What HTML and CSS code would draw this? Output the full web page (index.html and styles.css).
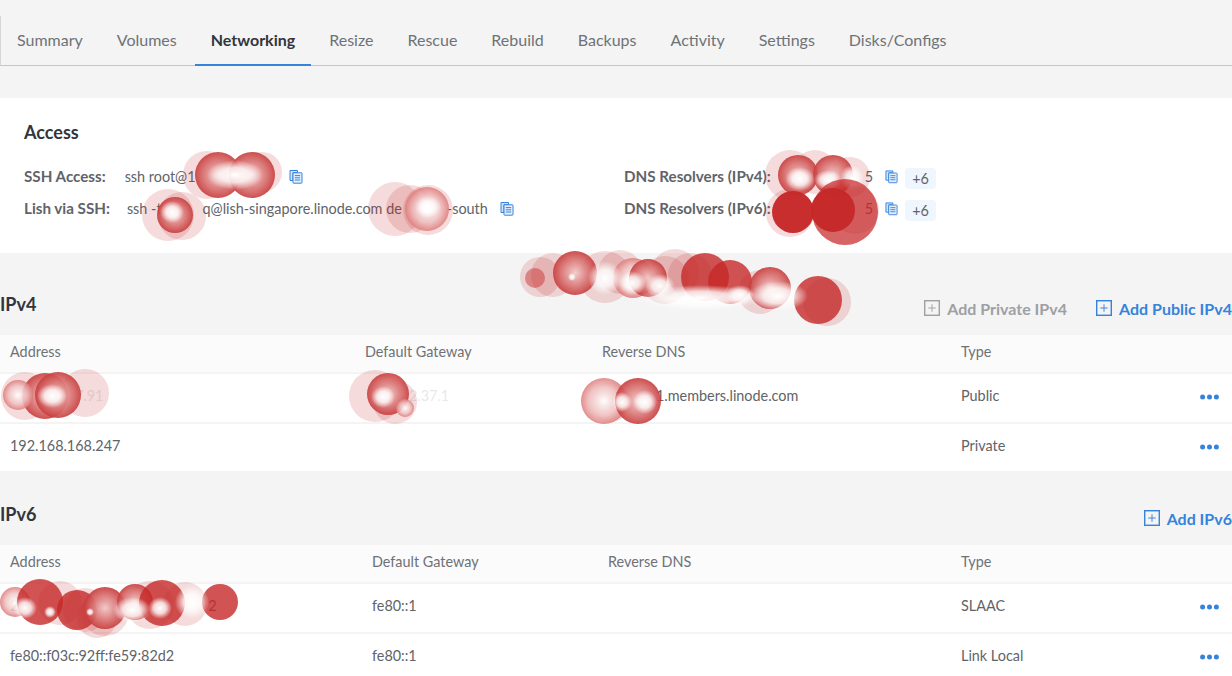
FILE: index.html
```html
<!DOCTYPE html>
<html lang="en">
<head>
<meta charset="utf-8">
<title>Networking</title>
<link rel="stylesheet" href="styles.css">
</head>
<body>
<svg width="0" height="0" class="defs" aria-hidden="true">
  <defs>
    <symbol id="copy" viewBox="0 0 14 15">
      <path d="M1 1.5h7.5v2H4v8H1z" fill="#cfe2f8" stroke="#3683dc" stroke-width="1"/>
      <rect x="4" y="3.8" width="9" height="10.4" rx=".6" fill="#e4effb" stroke="#3683dc" stroke-width="1"/>
      <path d="M5.8 6.6h5.4M5.8 8.8h5.4M5.8 11h5.4" stroke="#3683dc" stroke-width="1"/>
    </symbol>
    <symbol id="plus" viewBox="0 0 17 17">
      <rect x=".75" y=".75" width="15.5" height="15.5" fill="none" stroke="currentColor" stroke-width="1.5"/>
      <path d="M8.5 4.5v8M4.5 8.5h8" fill="none" stroke="currentColor" stroke-width="1"/>
    </symbol>
    <symbol id="dots" viewBox="0 0 19 6">
      <circle cx="2.6" cy="3" r="2.5" fill="#3683dc"/>
      <circle cx="9.5" cy="3" r="2.5" fill="#3683dc"/>
      <circle cx="16.4" cy="3" r="2.5" fill="#3683dc"/>
    </symbol>
  </defs>
</svg>

<nav class="tabs">
  <a class="tab">Summary</a>
  <a class="tab">Volumes</a>
  <a class="tab active">Networking</a>
  <a class="tab">Resize</a>
  <a class="tab">Rescue</a>
  <a class="tab">Rebuild</a>
  <a class="tab">Backups</a>
  <a class="tab">Activity</a>
  <a class="tab">Settings</a>
  <a class="tab">Disks/Configs</a>
</nav>

<section class="access">
  <h2 class="access-title">Access</h2>
  <div class="access-grid">
    <div class="access-row">
      <strong class="label">SSH Access:</strong>
      <span class="value v-ssh">ssh root@1<span class="hidden-part w-ssh"></span></span>
      <svg class="copy"><use href="#copy"/></svg>
    </div>
    <div class="access-row">
      <strong class="label">DNS Resolvers (IPv4):</strong>
      <span class="value v-dns"><span class="hidden-part w-dns"></span>5</span>
      <svg class="copy copy-dns"><use href="#copy"/></svg>
      <span class="chip">+6</span>
    </div>
    <div class="access-row">
      <strong class="label">Lish via SSH:</strong>
      <span class="value v-lish">ssh -t<span class="hidden-part w-l1"></span>q@lish-singapore.linode.com de<span class="hidden-part w-l2"></span>-south</span>
      <svg class="copy copy-lish"><use href="#copy"/></svg>
    </div>
    <div class="access-row">
      <strong class="label">DNS Resolvers (IPv6):</strong>
      <span class="value v-dns"><span class="hidden-part w-dns"></span>5</span>
      <svg class="copy copy-dns"><use href="#copy"/></svg>
      <span class="chip">+6</span>
    </div>
  </div>
</section>

<header class="sec-head sec-v4">
  <h3 class="sec-title">IPv4</h3>
  <div class="actions">
    <a class="action muted"><svg class="plus"><use href="#plus"/></svg>Add Private IPv4</a>
    <a class="action"><svg class="plus"><use href="#plus"/></svg>Add Public IPv4</a>
  </div>
</header>
<div class="table t4">
  <div class="row head"><span>Address</span><span>Default Gateway</span><span>Reverse DNS</span><span>Type</span><span></span></div>
  <div class="row"><span class="faded addr-v4">7.91</span><span class="faded gw-v4">2.37.1</span><span class="rdns">1.members.linode.com</span><span>Public</span><svg class="dots"><use href="#dots"/></svg></div>
  <div class="row last"><span>192.168.168.247</span><span></span><span></span><span>Private</span><svg class="dots"><use href="#dots"/></svg></div>
</div>

<header class="sec-head sec-v6">
  <h3 class="sec-title">IPv6</h3>
  <div class="actions">
    <a class="action"><svg class="plus"><use href="#plus"/></svg>Add IPv6</a>
  </div>
</header>
<div class="table t6">
  <div class="row head"><span>Address</span><span>Default Gateway</span><span>Reverse DNS</span><span>Type</span><span></span></div>
  <div class="row"><span>2<span class="hidden-part w-v6"></span>2</span><span>fe80::1</span><span></span><span>SLAAC</span><svg class="dots"><use href="#dots"/></svg></div>
  <div class="row"><span>fe80::f03c:92ff:fe59:82d2</span><span>fe80::1</span><span></span><span>Link Local</span><svg class="dots"><use href="#dots"/></svg></div>
</div>

<svg class="scribble" viewBox="0 0 1232 676" width="1232" height="676" aria-hidden="true">
  <defs>
    <radialGradient id="h"><stop offset="0" stop-color="#f3cccc" stop-opacity=".95"/><stop offset=".6" stop-color="#da7474" stop-opacity=".9"/><stop offset="1" stop-color="#c83c3c" stop-opacity=".9"/></radialGradient>
    <radialGradient id="l"><stop offset="0" stop-color="#fff" stop-opacity=".95"/><stop offset=".6" stop-color="#f0c4c4" stop-opacity=".85"/><stop offset="1" stop-color="#de7a7a" stop-opacity=".85"/></radialGradient>
    <radialGradient id="g"><stop offset="0" stop-color="#fff"/><stop offset=".5" stop-color="#fff" stop-opacity=".8"/><stop offset="1" stop-color="#fff" stop-opacity="0"/></radialGradient>
  </defs>
  <g class="faint">
    <circle cx="207" cy="175" r="24"/><circle cx="262" cy="172" r="20"/>
    <circle cx="168" cy="215" r="26"/><circle cx="182" cy="216" r="24"/>
    <circle cx="395" cy="209" r="27"/><circle cx="410" cy="209" r="24"/><circle cx="428" cy="210" r="25"/>
    <circle cx="790" cy="175" r="25"/><circle cx="850" cy="177" r="20"/><circle cx="815" cy="172" r="22"/>
    <circle cx="790" cy="213" r="24"/><circle cx="855" cy="210" r="24"/>
    <circle cx="540" cy="277" r="20"/><circle cx="553" cy="275" r="22"/><circle cx="605" cy="277" r="26"/><circle cx="620" cy="272" r="22"/><circle cx="675" cy="273" r="24"/><circle cx="690" cy="275" r="22"/><circle cx="665" cy="280" r="24"/><circle cx="827" cy="302" r="24"/><circle cx="760" cy="292" r="22"/>
    <circle cx="25" cy="396" r="24"/><circle cx="85" cy="393" r="24"/><circle cx="375" cy="396" r="26"/><circle cx="395" cy="402" r="22"/>
    <circle cx="610" cy="402" r="20"/>
    <circle cx="60" cy="603" r="22"/><circle cx="97" cy="618" r="20"/><circle cx="105" cy="612" r="24"/><circle cx="150" cy="605" r="24"/><circle cx="185" cy="604" r="22"/><circle cx="85" cy="610" r="22"/>
  </g>

  <circle cx="218" cy="175" r="23" fill="url(#h)"/><circle cx="252" cy="175" r="23" fill="url(#h)"/>
  <ellipse cx="235" cy="175" rx="28" ry="15" fill="url(#g)"/>
  <circle cx="175" cy="215" r="18" fill="url(#h)"/><ellipse cx="172" cy="212" rx="12" ry="11" fill="url(#g)"/>
  <circle cx="427" cy="209" r="22" fill="url(#l)"/><ellipse cx="428" cy="207" rx="13" ry="11" fill="url(#g)"/>
  <circle cx="798" cy="175" r="20" fill="url(#h)"/><circle cx="833" cy="175" r="20" fill="url(#h)"/>
  <ellipse cx="800" cy="179" rx="15" ry="12" fill="url(#g)"/><ellipse cx="828" cy="180" rx="14" ry="10" fill="url(#g)"/><ellipse cx="852" cy="178" rx="12" ry="13" fill="url(#g)"/>
  <circle cx="845" cy="212" r="33" class="mid"/><circle cx="793" cy="212" r="21" class="solid"/><circle cx="833" cy="210" r="22" class="solid"/>

  <circle cx="535" cy="278" r="10" class="mid-pale"/><circle cx="575" cy="273" r="22" fill="url(#h)"/><circle cx="572" cy="277" r="4" fill="url(#g)"/>
  <circle cx="633" cy="278" r="20" fill="url(#l)"/><circle cx="648" cy="278" r="19" fill="url(#h)"/>
  <circle cx="705" cy="277" r="24" class="mid-strong"/><circle cx="730" cy="282" r="22" class="mid-strong"/>
  <circle cx="770" cy="288" r="21" fill="url(#h)"/><circle cx="818" cy="300" r="24" class="mid-strong"/>
  <ellipse cx="700" cy="298" rx="62" ry="13" fill="url(#g)"/>
  <ellipse cx="605" cy="278" rx="17" ry="17" fill="url(#g)"/><ellipse cx="632" cy="283" rx="14" ry="12" fill="url(#g)"/><ellipse cx="660" cy="286" rx="15" ry="12" fill="url(#g)"/><ellipse cx="740" cy="295" rx="14" ry="10" fill="url(#g)"/><ellipse cx="778" cy="296" rx="30" ry="15" fill="url(#g)"/>

  <circle cx="45" cy="396" r="23" fill="url(#h)"/><circle cx="58" cy="395" r="23" fill="url(#h)"/><circle cx="18" cy="395" r="15" fill="url(#l)"/>
  <ellipse cx="52" cy="396" rx="15" ry="12" fill="url(#g)"/>
  <circle cx="388" cy="394" r="21" fill="url(#h)"/><circle cx="405" cy="408" r="9" fill="url(#l)"/><ellipse cx="383" cy="397" rx="12" ry="11" fill="url(#g)"/>
  <circle cx="604" cy="401" r="23" fill="url(#l)"/><circle cx="638" cy="401" r="23" fill="url(#h)"/><ellipse cx="645" cy="402" rx="12" ry="12" fill="url(#g)"/><ellipse cx="622" cy="402" rx="10" ry="10" fill="url(#g)"/>

  <circle cx="15" cy="602" r="15" fill="url(#l)"/><circle cx="40" cy="602" r="23" class="mid-strong"/>
  <circle cx="77" cy="610" r="20" class="mid-strong"/><circle cx="105" cy="608" r="21" fill="url(#h)"/>
  <circle cx="135" cy="602" r="18" fill="url(#h)"/><circle cx="162" cy="603" r="23" class="mid-strong"/>
  <circle cx="220" cy="602" r="18" class="mid-strong"/>
  <ellipse cx="25" cy="608" rx="12" ry="11" fill="url(#g)"/><ellipse cx="50" cy="612" rx="6" ry="6" fill="url(#g)"/><ellipse cx="90" cy="612" rx="4" ry="4" fill="url(#g)"/>
  <ellipse cx="132" cy="610" rx="19" ry="13" fill="url(#g)"/><ellipse cx="160" cy="608" rx="12" ry="11" fill="url(#g)"/><ellipse cx="192" cy="602" rx="17" ry="17" fill="url(#g)"/>
</svg>
</body>
</html>
```
FILE: styles.css
```css
* { box-sizing: border-box; }

html, body { margin: 0; height: 676px; overflow: hidden; }

body {
  position: relative;
  background: #f4f4f4;
  font-family: Lato, "Liberation Sans", sans-serif;
  font-size: 14.4px;
  color: #606469;
}

.defs { position: absolute; }

.tabs {
  display: flex;
  height: 50px;
  margin-top: 16px;
  border-left: 1px solid #d6d6d6;
  border-bottom: 1px solid #c5c6c8;
}
.tab {
  display: flex;
  align-items: center;
  height: 50px;
  padding: 0 17px 1px;
  font-size: 16px;
  color: #6e7277;
  border-bottom: 2px solid transparent;
}
.tab:first-child { padding-left: 16px; }
.tab.active {
  margin: 0 1px;
  padding: 0 16px 1px;
  font-weight: 700;
  color: #32363c;
  border-bottom-color: #3683dc;
}

.access {
  height: 155px;
  margin-top: 32px;
  padding: 23px 0 0 24px;
  background: #fff;
}
.access-title {
  margin: 0 0 17px;
  font-size: 18px;
  line-height: 22px;
  font-weight: 700;
  color: #32363c;
}
.access-grid {
  display: grid;
  grid-template-columns: 600px 1fr;
  grid-auto-rows: 32px;
}
.access-row { display: flex; align-items: center; }
.label { font-size: 15.2px; font-weight: 700; color: #606469; }
.value { white-space: nowrap; }
.v-ssh { margin-left: 19px; }
.v-lish { margin-left: 17px; }
.hidden-part { display: inline-block; }
.w-ssh { width: 85px; }
.w-l1 { width: 41px; }
.w-l2 { width: 45px; }
.w-dns { width: 94px; }
.w-v6 { width: 190px; }

.copy { width: 14px; height: 15px; margin-left: 9px; flex: none; }
.copy-lish { margin-left: 12px; }
.copy-dns { margin-left: 12px; width: 13px; }

.chip {
  display: flex;
  align-items: center;
  justify-content: center;
  width: 31px;
  height: 21px;
  margin: 4px 0 0 7px;
  background: #f0f6fe;
  border-radius: 4px;
}

.sec-head {
  display: flex;
  justify-content: space-between;
  align-items: flex-end;
}
.sec-v4 { height: 82px; }
.sec-v6 { height: 74px; }
.sec-title {
  margin: 0 0 20px;
  font-size: 18px;
  line-height: 22px;
  font-weight: 700;
  color: #32363c;
}
.actions { display: flex; gap: 29px; margin-bottom: 17px; }
.action {
  display: flex;
  align-items: center;
  gap: 7px;
  height: 20px;
  font-size: 16px;
  font-weight: 700;
  color: #3683dc;
  white-space: nowrap;
}
.action.muted { color: #9ea0a3; }
.plus { width: 16px; height: 16px; }

.table { background: #fff; }
.row {
  display: grid;
  align-items: center;
  height: 50px;
  padding: 0 0 6px 10px;
  border-top: 2px solid #f4f4f4;
}
.row.last { height: 49px; padding-bottom: 5px; }
.row.head {
  height: 37px;
  background: #fbfbfb;
  border-top: 0;
  padding-bottom: 5px;
  color: #6e7277;
}
.t4 .row { grid-template-columns: 355px 237px 359px 1fr 32px; }
.t6 .row { grid-template-columns: 362px 236px 353px 1fr 32px; }
.faded { color: #e8e9ec; }
.addr-v4 { padding-left: 65px; }
.gw-v4 { padding-left: 44px; }
.rdns { padding-left: 54px; }
.dots { width: 19px; height: 6px; margin-top: 4px; }

.scribble { position: absolute; left: 0; top: 0; pointer-events: none; }
.faint circle { fill: #c62828; fill-opacity: .17; }
.mid { fill: #c62828; fill-opacity: .72; }
.mid-pale { fill: #c62828; fill-opacity: .45; }
.mid-strong { fill: #c62828; fill-opacity: .8; }
.solid { fill: #c62828; fill-opacity: .97; }
```
